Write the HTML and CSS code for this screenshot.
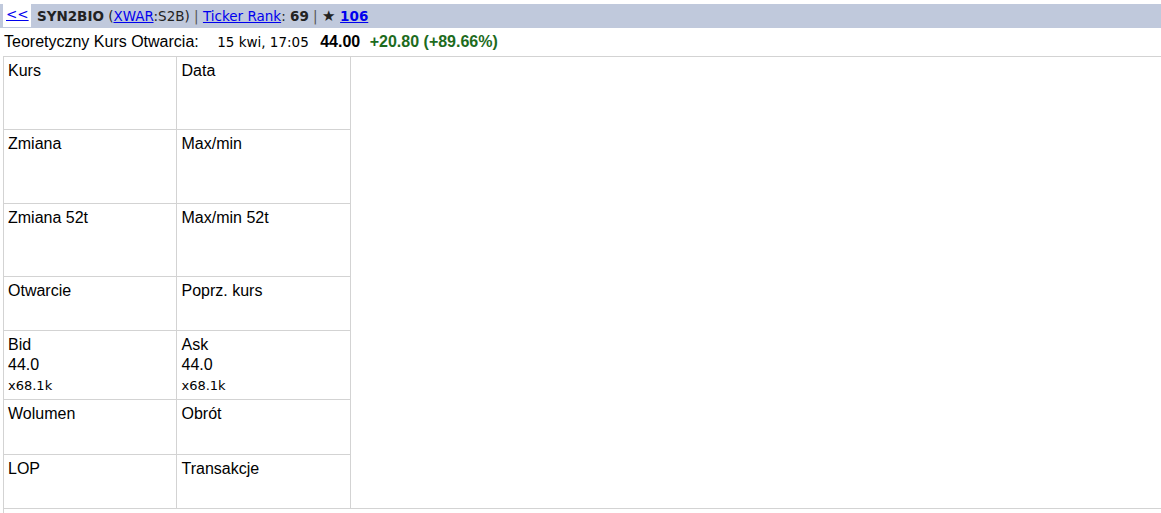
FILE: index.html
```html
<!DOCTYPE html>
<html lang="pl">
<head>
    <meta charset="UTF-8">
    <title>SYN2BIO - notowania</title>
    <link rel="stylesheet" href="styles.css">
</head>
<body>

    <div id="topbar"><a href="#" class="back">&lt;&lt;</a> <b>SYN2BIO</b> (<a href="#">XWAR</a>:S2B) <span class="sep">|</span> <a href="#">Ticker Rank</a>: <b>69</b> <span class="sep">|</span> <b><span class="star">&#9733;</span> <a href="#">106</a></b></div>

    <div id="quote">
        <span class="label">Teoretyczny Kurs Otwarcia:</span>
        <span class="time">15 kwi, 17:05</span>
        <span class="price">44.00</span>
        <span class="change">+20.80 (+89.66%)</span>
    </div>

    <div id="panel">
        <table class="stats">
            <tr class="row-tall"><td>Kurs</td><td>Data</td></tr>
            <tr class="row-tall2"><td>Zmiana</td><td>Max/min</td></tr>
            <tr class="row-tall"><td>Zmiana 52t</td><td>Max/min 52t</td></tr>
            <tr class="row-short"><td>Otwarcie</td><td>Poprz. kurs</td></tr>
            <tr class="row-bid">
                <td>Bid<br>44.0<br><span class="qty">x68.1k</span></td>
                <td>Ask<br>44.0<br><span class="qty">x68.1k</span></td>
            </tr>
            <tr class="row-short2"><td>Wolumen</td><td>Obrót</td></tr>
            <tr class="row-short"><td>LOP</td><td>Transakcje</td></tr>
        </table>
    </div>

    <div id="below"></div>

</body>
</html>
```

FILE: styles.css
```css
body {
    margin: 0;
    padding: 0;
    font-family: "Liberation Sans", Arial, sans-serif;
    font-size: 16px;
    color: #000;
    background-color: #fff;
}

a {
    color: #0000ee;
}

#topbar {
    margin-top: 4px;
    height: 24px;
    background-color: #c0c9dc;
    font-family: "DejaVu Sans", Verdana, sans-serif;
    font-size: 13.5px;
    line-height: 24px;
    white-space: nowrap;
    color: #222;
}

#topbar .back {
    display: inline-block;
    vertical-align: top;
    background-color: #fff;
    margin-left: 3px;
    margin-right: 2px;
    padding: 0 2px 0 3px;
    height: 23px;
    line-height: 21px;
    font-size: 13.5px;
}

#topbar .sep {
    color: #555;
}

#topbar .star {
    font-size: 15px;
}

#quote {
    height: 28px;
    line-height: 28px;
    padding-left: 4px;
    white-space: nowrap;
}

#quote .time {
    font-family: "DejaVu Sans", Verdana, sans-serif;
    font-size: 13.5px;
    margin-left: 14px;
}

#quote .price {
    font-weight: bold;
    margin-left: 7px;
}

#quote .change {
    font-weight: bold;
    color: #1d6b1d;
    margin-left: 5px;
}

#panel {
    margin-left: 3px;
    border-top: 1px solid #d3d3d3;
    border-left: 1px solid #d3d3d3;
    border-bottom: 1px solid #d3d3d3;
}

.stats {
    border-collapse: collapse;
    width: 347px;
}

.stats td {
    width: 164px;
    vertical-align: top;
    padding: 4px 4px 0 4px;
    line-height: 20px;
    border-right: 1px solid #d3d3d3;
    border-bottom: 1px solid #d3d3d3;
}

.stats tr:last-child td {
    border-bottom: none;
}

.row-tall td {
    height: 68px;
}

.row-tall2 td {
    height: 69px;
}

.row-short td {
    height: 49px;
}

.row-short2 td {
    height: 50px;
}

.row-bid td {
    height: 64px;
}

.qty {
    font-family: "DejaVu Sans", Verdana, sans-serif;
    font-size: 13px;
}

#below {
    margin-left: 3px;
    height: 20px;
    border-left: 1px solid #d3d3d3;
}
```
